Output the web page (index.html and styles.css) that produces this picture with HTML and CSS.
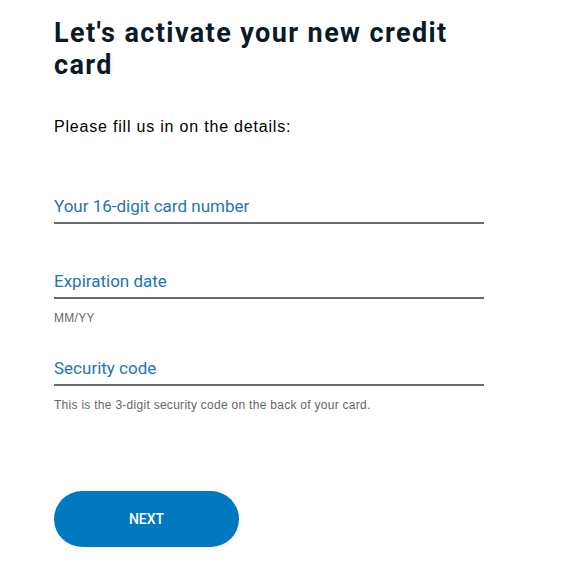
FILE: index.html
```html
<!DOCTYPE html>
<html lang="en">
<head>
<meta charset="utf-8">
<title>Activate card</title>
<link rel="stylesheet" href="styles.css">
</head>
<body>
<main class="page">
  <h1 class="title">Let's activate your new credit card</h1>
  <p class="intro">Please fill us in on the details:</p>
  <form class="form">
    <div class="field first">
      <label class="label">Your 16-digit card number</label>
    </div>
    <div class="field">
      <label class="label">Expiration date</label>
      <div class="hint">MM/YY</div>
    </div>
    <div class="field">
      <label class="label">Security code</label>
      <div class="hint">This is the 3-digit security code on the back of your card.</div>
    </div>
    <button type="button" class="next">NEXT</button>
  </form>
</main>
</body>
</html>
```

FILE: styles.css
```css
* { box-sizing: border-box; }
html, body { margin: 0; padding: 0; background: #fff; }
.page {
  padding: 17px 0 0 54px;
  width: 484px;
}
.title {
  margin: 0;
  font-family: Roboto, "Liberation Sans", sans-serif;
  font-weight: 700;
  font-size: 27px;
  line-height: 32px;
  letter-spacing: 1.4px;
  color: #0b1a26;
}
.intro {
  margin: 36px 0 0;
  font-family: "Liberation Sans", Arial, sans-serif;
  font-size: 16px;
  line-height: 20px;
  letter-spacing: 0.8px;
  color: #000;
}
.form { display: flex; flex-direction: column; }
.field { display: flex; flex-direction: column; }
.field.first { margin-top: 59px; }
.field + .field { margin-top: 47px; }
.field + .field + .field { margin-top: 33px; }
.label {
  font-family: Roboto, "Liberation Sans", sans-serif;
  font-size: 17px;
  line-height: 20px;
  color: #1f75b2;
  padding-bottom: 6px;
  border-bottom: 2px solid #67696e;
}
.hint {
  margin-top: 12px;
  font-family: "Liberation Sans", Arial, sans-serif;
  font-size: 12px;
  line-height: 14px;
  letter-spacing: 0.28px;
  color: #666;
}
.next {
  margin-top: 79px;
  width: 185px;
  height: 56px;
  border: 0;
  border-radius: 28px;
  background: #0079c1;
  color: #fff;
  font-family: Roboto, "Liberation Sans", sans-serif;
  font-weight: 500;
  font-size: 14px;
  cursor: pointer;
}
```
